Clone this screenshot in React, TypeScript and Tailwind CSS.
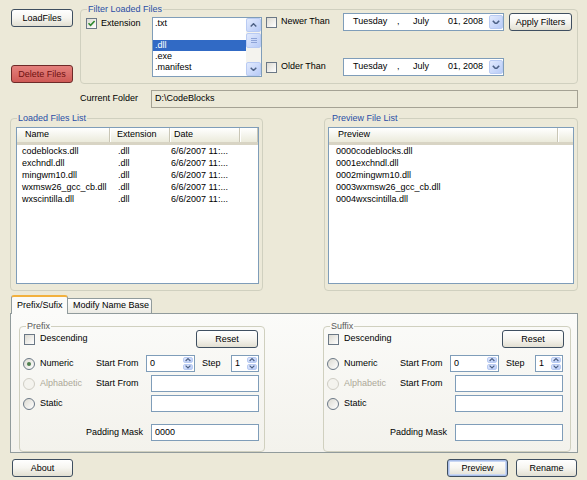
import React from 'react';

type Kids = { children?: React.ReactNode; className?: string };

function Btn({ children, className = '', def = false, danger = false }: Kids & { def?: boolean; danger?: boolean }) {
  const skin = danger
    ? 'border-[#6e2a28] bg-gradient-to-b from-[#e4817d] to-[#cf5a56] text-[#6e1010]'
    : 'border-[#3f4f60] bg-gradient-to-b from-white via-[#f6f5f0] to-[#e2dfd2] text-black';
  return (
    <div
      className={`h-[18px] shrink-0 rounded-[3px] border flex items-center justify-center leading-none ${skin} ${
        def ? 'shadow-[inset_0_0_0_1px_#a8bde8,inset_0_0_0_2px_#c9d7f3]' : ''
      } ${className}`}
    >
      {children}
    </div>
  );
}

function Check({ checked = false }: { checked?: boolean }) {
  return (
    <div className="w-[11px] h-[11px] shrink-0 border border-[#6b7886] bg-gradient-to-br from-[#dcdad2] to-white flex items-center justify-center">
      {checked && (
        <svg width="9" height="9" viewBox="0 0 9 9">
          <path d="M1.5 4.2 L3.6 6.4 L7.6 2" fill="none" stroke="#2f8a2f" strokeWidth="1.6" />
        </svg>
      )}
    </div>
  );
}

function Radio({ checked = false, disabled = false }: { checked?: boolean; disabled?: boolean }) {
  return (
    <div
      className={`w-[12px] h-[12px] shrink-0 rounded-full border flex items-center justify-center ${
        disabled ? 'border-[#cfcdc4] bg-[#f4f3ee]' : 'border-[#6b7886] bg-gradient-to-br from-[#dcdad2] to-white'
      }`}
    >
      {checked && <div className="w-[4px] h-[4px] rounded-full bg-[#4f7f4f]" />}
    </div>
  );
}

function Arrow({ up = false, size = 7 }: { up?: boolean; size?: number }) {
  return (
    <svg width={size} height={size * 0.6} viewBox="0 0 10 6">
      <path d={up ? 'M1 5 L5 1 L9 5' : 'M1 1 L5 5 L9 1'} fill="none" stroke="#4d6185" strokeWidth="2" />
    </svg>
  );
}

function BlueBtn({ children, className = '' }: Kids) {
  return (
    <div
      className={`rounded-[2px] border border-[#b9cbf3] bg-gradient-to-br from-[#e2eafd] to-[#b8cbf7] flex items-center justify-center ${className}`}
    >
      {children}
    </div>
  );
}

function TextBox({ value = '', className = '' }: { value?: string; className?: string }) {
  return (
    <div className={`h-[17px] shrink-0 border border-[#7f9db9] bg-white flex items-center pl-[3px] ${className}`}>
      {value}
    </div>
  );
}

function Spin({ value, className = '' }: { value: string; className?: string }) {
  return (
    <div className={`h-[17px] shrink-0 border border-[#7f9db9] bg-white flex ${className}`}>
      <div className="flex-1 flex items-center pl-[3px]">{value}</div>
      <div className="w-[12px] flex flex-col p-[1px] gap-[1px]">
        <BlueBtn className="flex-1">
          <Arrow up size={6} />
        </BlueBtn>
        <BlueBtn className="flex-1">
          <Arrow size={6} />
        </BlueBtn>
      </div>
    </div>
  );
}

function Group({ title, className = '', legend = 'text-[#2a4ea6]', children }: Kids & { title: string; legend?: string }) {
  return (
    <fieldset className={`border border-[#d0d0bf] rounded-[4px] shrink-0 ${className}`}>
      <legend className={`ml-[6px] px-[1px] leading-[11px] ${legend}`}>{title}</legend>
      {children}
    </fieldset>
  );
}

function DatePicker() {
  return (
    <div className="w-[161px] h-[18px] shrink-0 border border-[#7f9db9] bg-white flex items-center">
      <span className="ml-[9px] w-[44px]">Tuesday</span>
      <span className="w-[16px]">,</span>
      <span className="w-[35px]">July</span>
      <span className="w-[40px]">01, 2008</span>
      <BlueBtn className="w-[14px] h-[14px] ml-[1px]">
        <Arrow size={8} />
      </BlueBtn>
    </div>
  );
}

function ListBox() {
  const items = ['.txt', '', '.dll', '.exe', '.manifest'];
  return (
    <div className="w-[110px] h-[60px] border border-[#7f9db9] bg-white flex">
      <div className="flex-1 pt-[0px]">
        {items.map((it, i) => (
          <div
            key={i}
            className={`h-[11px] leading-[11px] pl-[2px] ${i === 2 ? 'bg-[#316ac5] text-white' : ''}`}
          >
            {it}
          </div>
        ))}
      </div>
      <div className="w-[15px] flex flex-col bg-[#f4f3ee]">
        <BlueBtn className="h-[14px]">
          <Arrow up />
        </BlueBtn>
        <BlueBtn className="h-[15px] mt-[1px] flex-col gap-[1px]">
          <div className="w-[6px] h-px bg-[#8ea4d8]" />
          <div className="w-[6px] h-px bg-[#8ea4d8]" />
          <div className="w-[6px] h-px bg-[#8ea4d8]" />
        </BlueBtn>
        <div className="flex-1" />
        <BlueBtn className="h-[14px]">
          <Arrow />
        </BlueBtn>
      </div>
    </div>
  );
}

function HeadCell({ children, className = '' }: Kids) {
  return (
    <div className={`h-full flex items-center border-r border-[#c9c6b6] shadow-[1px_0_0_white] shrink-0 ${className}`}>
      {children}
    </div>
  );
}

const loaded = [
  ['codeblocks.dll', '.dll', '6/6/2007 11:...'],
  ['exchndl.dll', '.dll', '6/6/2007 11:...'],
  ['mingwm10.dll', '.dll', '6/6/2007 11:...'],
  ['wxmsw26_gcc_cb.dll', '.dll', '6/6/2007 11:...'],
  ['wxscintilla.dll', '.dll', '6/6/2007 11:...'],
];

const previews = [
  '0000codeblocks.dll',
  '0001exchndl.dll',
  '0002mingwm10.dll',
  '0003wxmsw26_gcc_cb.dll',
  '0004wxscintilla.dll',
];

function NamePanel({ title, numeric, padding, className = '' }: { title: string; numeric: boolean; padding: string; className?: string }) {
  return (
    <Group title={title} legend="text-[#5a5a5a]" className={`mt-[7px] ${className}`}>
      <div className="flex flex-col pb-[5px]">
        {/* Descending + Reset */}
        <div className="-mt-[2px] h-[18px] flex items-center">
          <div className="ml-[4px] flex items-center gap-[5px]">
            <Check />
            <span>Descending</span>
          </div>
          <Btn className="ml-auto mr-[6px] w-[62px]">Reset</Btn>
        </div>
        {/* Numeric */}
        <div className="mt-[7px] h-[17px] flex items-center">
          <div className="w-[76px] pl-[3px] flex items-center gap-[5px]">
            <Radio checked={numeric} />
            <span>Numeric</span>
          </div>
          <span className="w-[50px]">Start From</span>
          <Spin value="0" className="w-[49px]" />
          <span className="ml-[7px] w-[29px]">Step</span>
          <Spin value="1" className="w-[28px]" />
        </div>
        {/* Alphabetic */}
        <div className="mt-[3px] h-[17px] flex items-center">
          <div className="w-[76px] pl-[3px] flex items-center gap-[5px] text-[#aca899]">
            <Radio disabled />
            <span>Alphabetic</span>
          </div>
          <span className="w-[55px]">Start From</span>
          <TextBox className="w-[108px]" />
        </div>
        {/* Static */}
        <div className="mt-[3px] h-[17px] flex items-center">
          <div className="w-[76px] pl-[3px] flex items-center gap-[5px]">
            <Radio />
            <span>Static</span>
          </div>
          <span className="w-[55px]" />
          <TextBox className="w-[108px]" />
        </div>
        {/* Padding */}
        <div className="mt-[12px] h-[17px] flex items-center">
          <span className="w-[131px] text-right pr-[8px]">Padding Mask</span>
          <TextBox value={padding} className="w-[108px]" />
        </div>
      </div>
    </Group>
  );
}

export default function App() {
  return (
    <div className="w-[587px] h-[480px] bg-[#ece9d8] font-['Liberation_Sans',Arial,sans-serif] text-[9px] text-black overflow-hidden flex flex-col">
      {/* Top: buttons + filter */}
      <div className="flex h-[84px]">
        <div className="w-[80px] pl-[11px] pt-[9px] flex flex-col">
          <Btn className="w-[62px]">LoadFiles</Btn>
          <Btn danger className="w-[62px] mt-[38px]">
            Delete Files
          </Btn>
        </div>
        <Group title="Filter Loaded Files" className="mt-[4px] w-[498px]">
          <div className="flex h-[68px]">
            <div className="w-[71px] pl-[5px] pt-[3px]">
              <div className="flex items-center gap-[4px] h-[11px]">
                <Check checked />
                <span>Extension</span>
              </div>
            </div>
            <div className="pt-[2px]">
              <ListBox />
            </div>
            <div className="pl-[4px] -mt-[2px] flex flex-col">
              <div className="h-[18px] flex items-center">
                <div className="w-[77px] flex items-center gap-[4px]">
                  <Check />
                  <span>Newer Than</span>
                </div>
                <DatePicker />
                <Btn className="ml-[5px] w-[63px]">Apply Filters</Btn>
              </div>
              <div className="mt-[27px] h-[18px] flex items-center">
                <div className="w-[77px] flex items-center gap-[4px]">
                  <Check />
                  <span>Older Than</span>
                </div>
                <DatePicker />
              </div>
            </div>
          </div>
        </Group>
      </div>

      {/* Current folder */}
      <div className="mt-[6px] h-[18px] flex items-center">
        <span className="pl-[80px] w-[151px]">Current Folder</span>
        <div className="w-[427px] h-[18px] border border-[#a5a294] bg-[#ece9d8] flex items-center pl-[3px]">
          D:\CodeBlocks
        </div>
      </div>

      {/* Lists */}
      <div className="flex mt-[5px]">
        <Group title="Loaded Files List" className="ml-[10px] w-[253px]">
          <div className="h-[166px] pt-[3px] pl-[5px]">
            <div className="w-[243px] h-[157px] border border-[#7f9db9] bg-white overflow-hidden">
              <div className="flex h-[17px] bg-gradient-to-b from-white to-[#ebeadb] border-b-[3px] border-[#d8d4c4]">
                <HeadCell className="w-[93px] pl-[8px]">Name</HeadCell>
                <HeadCell className="w-[60px] pl-[7px]">Extension</HeadCell>
                <HeadCell className="w-[70px] pl-[4px]">Date</HeadCell>
                <HeadCell className="w-[18px]" />
              </div>
              <div className="pt-[1px]">
                {loaded.map((r) => (
                  <div key={r[0]} className="flex h-[12px] items-center">
                    <span className="w-[93px] pl-[5px]">{r[0]}</span>
                    <span className="w-[60px] pl-[8px]">{r[1]}</span>
                    <span className="w-[70px] pl-[1px]">{r[2]}</span>
                  </div>
                ))}
              </div>
            </div>
          </div>
        </Group>
        <Group title="Preview File List" className="ml-[61px] w-[254px]">
          <div className="h-[166px] pt-[3px] pl-[3px]">
            <div className="w-[246px] h-[157px] border border-[#7f9db9] bg-white overflow-hidden">
              <div className="flex h-[17px] bg-gradient-to-b from-white to-[#ebeadb] border-b-[3px] border-[#d8d4c4]">
                <HeadCell className="w-[229px] pl-[9px]">Preview</HeadCell>
              </div>
              <div className="pt-[1px]">
                {previews.map((p) => (
                  <div key={p} className="h-[12px] flex items-center pl-[7px]">
                    {p}
                  </div>
                ))}
              </div>
            </div>
          </div>
        </Group>
      </div>

      {/* Tabs */}
      <div className="mt-[4px] h-[18px] flex items-end pl-[11px]">
        <div className="relative z-10 -mb-px w-[57px] h-[19px] rounded-t-[3px] border border-b-0 border-[#919b9c] border-t-[2px] border-t-[#f2b13e] bg-[#fbfbf9] flex items-center pl-[5px]">
          Prefix/Sufix
        </div>
        <div className="w-[84px] h-[15px] rounded-tr-[3px] border border-l-0 border-b-0 border-[#919b9c] bg-gradient-to-b from-white to-[#ecebe4] flex items-center pl-[5px]">
          Modify Name Base
        </div>
      </div>
      <div className="ml-[10px] w-[568px] h-[140px] border border-[#919b9c] bg-gradient-to-b from-[#fbfbf9] to-[#f3f2ec] flex">
        <NamePanel title="Prefix" numeric padding="0000" className="ml-[8px] w-[246px]" />
        <NamePanel title="Suffix" numeric={false} padding="" className="ml-[58px] w-[248px]" />
      </div>

      {/* Bottom buttons */}
      <div className="mt-[6px] flex">
        <Btn className="ml-[12px] w-[61px]">About</Btn>
        <Btn def className="ml-auto w-[61px]">
          Preview
        </Btn>
        <Btn className="ml-[8px] mr-[10px] w-[61px]">Rename</Btn>
      </div>
    </div>
  );
}
